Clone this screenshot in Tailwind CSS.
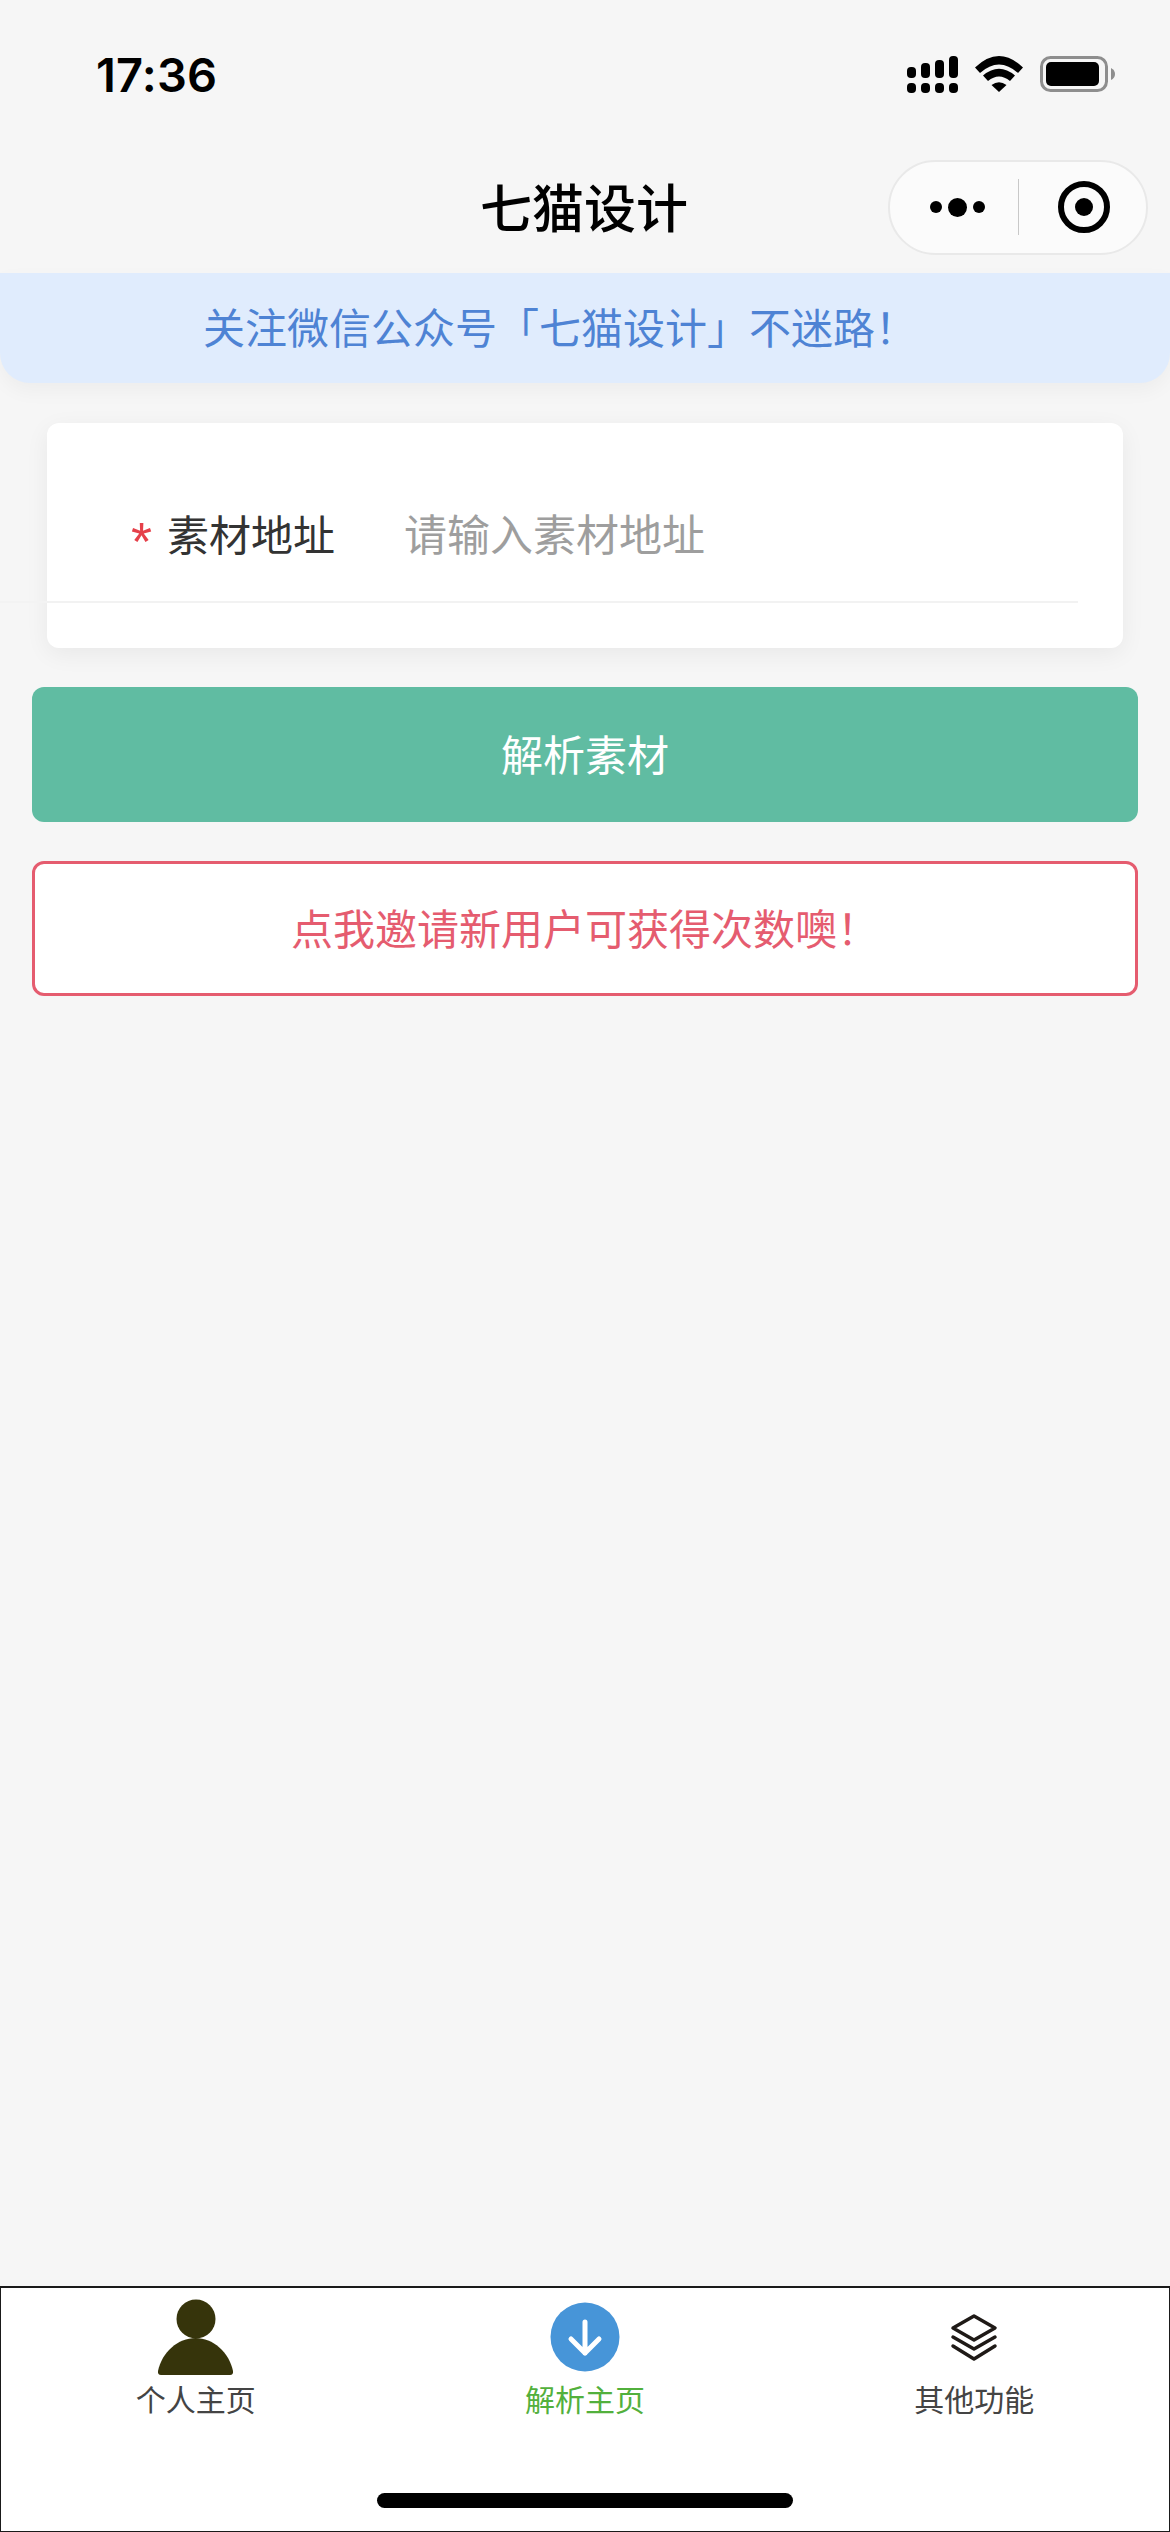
<!DOCTYPE html>
<html>
<head>
  <meta charset="UTF-8" />
  <meta name="viewport" content="width=device-width, initial-scale=1.0" />
  <title>七猫设计</title>
  <script src="https://cdn.jsdelivr.net/npm/@tailwindcss/browser@4"></script>
</head>
<body class="bg-[#f6f6f6] font-['Noto_Sans_CJK_SC',sans-serif]">
  <div class="w-[1170px] h-[2532px] flex flex-col overflow-hidden">

    <!-- status bar -->
    <div class="h-[148px] shrink-0 flex items-center justify-between pl-[96px] pr-[55px]">
      <span class="font-['Inter',sans-serif] font-semibold text-[47px] leading-none tracking-[0.2px] text-black">17:36</span>
      <div class="flex items-center gap-[17px]">
        <svg width="51" height="37" viewBox="0 0 51 37" fill="#000">
          <rect x="0" y="11" width="9" height="11" rx="4"/>
          <rect x="14" y="7" width="9" height="15" rx="4"/>
          <rect x="28" y="4" width="9" height="18" rx="4"/>
          <rect x="42" y="0" width="9" height="22" rx="4"/>
          <rect x="0" y="27" width="9" height="10" rx="4"/>
          <rect x="14" y="27" width="9" height="10" rx="4"/>
          <rect x="28" y="27" width="9" height="10" rx="4"/>
          <rect x="42" y="27" width="9" height="10" rx="4"/>
        </svg>
        <svg width="48" height="36" viewBox="0 0 48 36" fill="#000">
          <path d="M0 11.5 Q24 -11.5 48 11.5 L43 17 Q24 0 5 17 Z"/>
          <path d="M8 19.5 Q24 6 40 19.5 L35 25 Q24 16 13 25 Z"/>
          <path d="M16.5 29 Q24 23.5 31.5 29 L24 36 Z"/>
        </svg>
        <svg width="75" height="36" viewBox="0 0 75 36">
          <rect x="1.5" y="1.5" width="65" height="33" rx="9" fill="none" stroke="#8e8e8e" stroke-width="3"/>
          <rect x="6" y="6" width="53" height="24" rx="5" fill="#000"/>
          <path d="M71 12 Q75 14 75 18 Q75 22 71 24 Z" fill="#8e8e8e"/>
        </svg>
      </div>
    </div>

    <!-- nav bar -->
    <div class="h-[125px] shrink-0 pb-[7px] grid grid-cols-3 items-center">
      <div></div>
      <h1 class="text-center text-[52px] leading-none font-medium text-black whitespace-nowrap pb-[3px] pr-[2px]">七猫设计</h1>
      <div class="justify-self-end mr-[22px] w-[260px] h-[95px] rounded-full border-2 border-[#e9e9e9] bg-[#fbfbfb] flex items-center">
        <div class="w-[128px] flex items-center justify-center gap-[6px] pl-[6px]">
          <span class="w-[12px] h-[12px] rounded-full bg-black"></span>
          <span class="w-[19px] h-[19px] rounded-full bg-black"></span>
          <span class="w-[12px] h-[12px] rounded-full bg-black"></span>
        </div>
        <div class="w-[1px] h-[56px] bg-[#c8c8c8]"></div>
        <div class="flex-1 flex items-center justify-center pl-[3px]">
          <div class="w-[52px] h-[52px] rounded-full border-[6px] border-black flex items-center justify-center">
            <span class="w-[18px] h-[18px] rounded-full bg-black"></span>
          </div>
        </div>
      </div>
    </div>

    <!-- notice -->
    <div class="h-[110px] shrink-0 pb-[5px] bg-[#e0ecfd] rounded-b-[30px] shadow-[0_8px_20px_rgba(0,0,0,0.04)] flex items-center pl-[203px] text-[42px] leading-none text-[#4e83d4] whitespace-nowrap">关注微信公众号「七猫设计」不迷路！</div>

    <!-- form card -->
    <div class="relative mx-[47px] mt-[40px] h-[225px] shrink-0 bg-white rounded-[12px] shadow-[0_6px_24px_rgba(0,0,0,0.06)] pr-[45px]">
      <div class="h-[180px] pt-[41px] pl-[84px] flex items-center border-b-[2px] border-[#f2f2f2] leading-none">
        <span class="w-[36px] text-[#e5404a] font-['Liberation_Sans',sans-serif] text-[54px] pt-[16px]">*</span>
        <span class="w-[237px] text-[#333] text-[42px]">素材地址</span>
        <span class="text-[#9e9e9e] text-[43px]">请输入素材地址</span>
      </div>
      <div class="absolute -left-[47px] top-[178px] w-[47px] h-[2px] bg-[#f3f3f3]"></div>
    </div>

    <!-- buttons -->
    <button class="mx-[32px] mt-[39px] h-[135px] shrink-0 pb-[3px] rounded-[12px] bg-[#60bca2] text-white text-[42px] leading-none">解析素材</button>
    <button class="mx-[32px] mt-[39px] h-[135px] shrink-0 pb-[3px] rounded-[12px] bg-white border-[3px] border-[#e55c6f] text-[#e55c6f] text-[42px] leading-none">点我邀请新用户可获得次数噢！</button>

    <!-- tab bar -->
    <div class="mt-auto h-[246px] shrink-0 bg-white border-t-2 border-x border-b border-[#1a1a1a] flex flex-col">
      <div class="grid grid-cols-3 pt-[10px]">
        <div class="flex flex-col items-center">
          <svg width="80" height="80" viewBox="0 0 80 80" fill="#36340b">
            <circle cx="40" cy="21" r="19.5"/>
            <path d="M2 73 C6 54 22 40 39.5 40 C57 40 73 54 77 73 Q77.5 77 74 77 H5 Q1.5 77 2 73 Z"/>
          </svg>
          <span class="mt-[5px] text-[30px] leading-[30px] text-[#444]">个人主页</span>
        </div>
        <div class="flex flex-col items-center">
          <svg width="80" height="80" viewBox="0 0 80 80" fill="none">
            <circle cx="40" cy="39" r="34.5" fill="#4795d8"/>
            <path d="M40 24 V55 M26 41 L40 55 L54 41" stroke="#fff" stroke-width="5" stroke-linecap="round" stroke-linejoin="round"/>
          </svg>
          <span class="mt-[5px] text-[30px] leading-[30px] text-[#52b03c]">解析主页</span>
        </div>
        <div class="flex flex-col items-center">
          <svg width="80" height="80" viewBox="0 0 80 80" fill="none" stroke="#1f1a17" stroke-width="3.5" stroke-linecap="round" stroke-linejoin="round">
            <path d="M40 18 L61 30 L40 42 L19 30 Z"/>
            <path d="M19 39 L40 51 L61 39"/>
            <path d="M19 48 L40 61 L61 48"/>
          </svg>
          <span class="mt-[5px] text-[30px] leading-[30px] text-[#444]">其他功能</span>
        </div>
      </div>
      <div class="mt-auto mb-[23px] mx-auto w-[416px] h-[15px] rounded-full bg-black"></div>
    </div>

  </div>
</body>
</html>
